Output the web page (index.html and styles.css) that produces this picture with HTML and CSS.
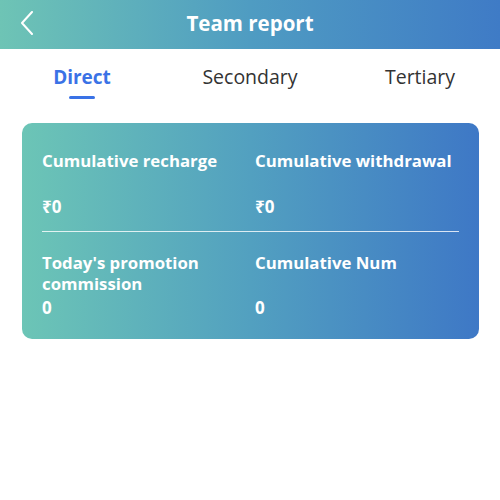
FILE: index.html
```html
<!DOCTYPE html>
<html>
<head>
<meta charset="utf-8">
<link rel="stylesheet" href="styles.css">
</head>
<body>
<header class="topbar">
  <svg class="back" width="14" height="24" viewBox="0 0 14 24"><path d="M12 1 L2 12 L12 23" fill="none" stroke="#fff" stroke-width="2" stroke-linecap="round" stroke-linejoin="round"/></svg>
  <h1 class="title">Team report</h1>
</header>
<nav class="tabs">
  <div class="tab active">Direct<span class="bar"></span></div>
  <div class="tab">Secondary</div>
  <div class="tab last">Tertiary</div>
</nav>
<section class="card">
  <div class="row">
    <div class="cell">
      <div class="label">Cumulative recharge</div>
      <div class="value money">₹0</div>
    </div>
    <div class="cell">
      <div class="label">Cumulative withdrawal</div>
      <div class="value money">₹0</div>
    </div>
  </div>
  <div class="divider"></div>
  <div class="row">
    <div class="cell">
      <div class="label">Today's promotion commission</div>
      <div class="value">0</div>
    </div>
    <div class="cell">
      <div class="label">Cumulative Num</div>
      <div class="value">0</div>
    </div>
  </div>
</section>
</body>
</html>
```
FILE: styles.css
```css
* { box-sizing: border-box; }
body {
  margin: 0;
  width: 500px;
  height: 500px;
  background: #fff;
  font-family: "Open Sans", "Noto Sans", sans-serif;
  overflow: hidden;
}
.topbar {
  height: 49px;
  background: linear-gradient(90deg, #6ec4b5 0%, #4f9cc2 50%, #3f7bc6 100%);
  display: flex;
  align-items: center;
  justify-content: center;
  position: relative;
  padding-bottom: 3px;
}
.back {
  position: absolute;
  left: 20px;
  top: 11px;
}
.title {
  margin: 0;
  color: #fff;
  font-size: 20.5px;
  font-weight: 700;
  letter-spacing: 0;
}
.tabs {
  display: grid;
  grid-template-columns: 164px 172px 164px;
  height: 74px;
  padding-top: 15px;
}
.tab {
  position: relative;
  text-align: center;
  font-size: 19.5px;
  color: #333;
  line-height: 26px;
}
.tab.last { padding-left: 4px; }
.tab.active {
  color: #3a72e6;
  font-weight: 700;
  font-size: 19px;
}
.tab .bar {
  position: absolute;
  left: 50%;
  top: 32px;
  width: 26px;
  height: 3px;
  margin-left: -13px;
  border-radius: 2px;
  background: #3a72e6;
}
.card {
  margin: 0 21px 0 22px;
  height: 216px;
  border-radius: 10px;
  background: linear-gradient(90deg, #6cc5b6 0%, #52a0c0 50%, #3e78c6 100%);
  padding: 27px 20px 0 20px;
  color: #fff;
}
.row {
  display: grid;
  grid-template-columns: 213px 1fr;
}
.label {
  font-size: 16.8px;
  font-weight: 700;
  line-height: 21px;
}
.value {
  font-size: 17px;
  font-weight: 700;
  line-height: 22px;
}
.money { margin-top: 25px; }
.row + .divider + .row .value { margin-top: 3px; }
.row + .divider + .row .cell:nth-child(2) .value { margin-top: 24px; }
.divider {
  height: 1px;
  background: rgba(255,255,255,0.8);
  margin: 13px 0 20px;
}
```
